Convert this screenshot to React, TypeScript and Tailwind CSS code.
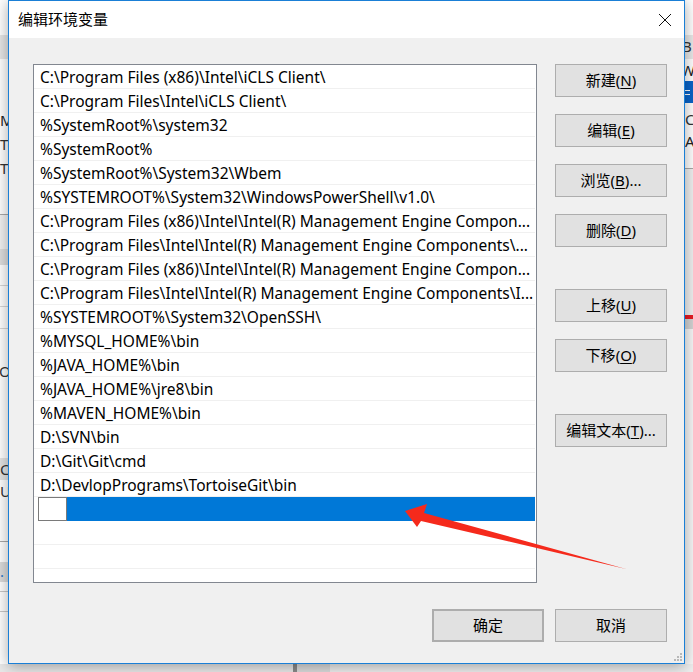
import React from "react"

const paths = [
  "C:\\Program Files (x86)\\Intel\\iCLS Client\\",
  "C:\\Program Files\\Intel\\iCLS Client\\",
  "%SystemRoot%\\system32",
  "%SystemRoot%",
  "%SystemRoot%\\System32\\Wbem",
  "%SYSTEMROOT%\\System32\\WindowsPowerShell\\v1.0\\",
  "C:\\Program Files (x86)\\Intel\\Intel(R) Management Engine Compon...",
  "C:\\Program Files\\Intel\\Intel(R) Management Engine Components\\...",
  "C:\\Program Files (x86)\\Intel\\Intel(R) Management Engine Compon...",
  "C:\\Program Files\\Intel\\Intel(R) Management Engine Components\\I...",
  "%SYSTEMROOT%\\System32\\OpenSSH\\",
  "%MYSQL_HOME%\\bin",
  "%JAVA_HOME%\\bin",
  "%JAVA_HOME%\\jre8\\bin",
  "%MAVEN_HOME%\\bin",
  "D:\\SVN\\bin",
  "D:\\Git\\Git\\cmd",
  "D:\\DevlopPrograms\\TortoiseGit\\bin",
]

const uiFont = "font-['Noto_Sans','Noto_Sans_CJK_SC',sans-serif]"

function WinButton({
  label,
  hotkey,
  suffix,
  className = "",
}: {
  label: string
  hotkey?: string
  suffix?: string
  className?: string
}) {
  return (
    <div
      className={`w-[112px] h-[33px] flex items-center justify-center bg-[#e1e1e1] border border-[#adadad] text-[15px] text-black ${className}`}
    >
      <span>
        {label}
        {hotkey && (
          <>
            (<span className="underline underline-offset-2">{hotkey}</span>)
          </>
        )}
        {suffix}
      </span>
    </div>
  )
}

// bits of the window behind the dialog, peeking out on the left
function LeftStrip() {
  return (
    <div className="w-[8px] h-full bg-white overflow-hidden flex flex-col text-[15px] leading-[24px] whitespace-nowrap">
      <div className="h-[35px]" />
      <div className="h-[24px] bg-[#e6e6e6]" />
      <div className="h-[49px]" />
      <div className="h-[24px] text-[#222]">M</div>
      <div className="h-[24px]">
        <span className="text-[#333]">T</span>
        <span className="text-[#2b79c9]">e</span>
      </div>
      <div className="h-[24px]">
        <span className="text-[#333]">T</span>
        <span className="text-[#2b79c9]">e</span>
      </div>
      <div className="h-[35px] border-b border-[#a9a9a9]" />
      <div className="h-[34px] bg-[#f2f2f2]" />
      <div className="h-[16px] bg-[#dedede]" />
      <div className="h-[21px] border-b border-[#d6d6d6]" />
      <div className="h-[21px] border-b border-[#d6d6d6]" />
      <div className="h-[22px] border-b border-[#d6d6d6]" />
      <div className="h-[30px]" />
      <div className="h-[24px] text-[#333] -ml-[1px]">Or</div>
      <div className="h-[75px]" />
      <div className="h-[22px] bg-[#e4e4e4] text-[#333] leading-[22px]">C</div>
      <div className="h-[22px] text-[#333] leading-[22px]">US</div>
      <div className="h-[40px] border-b border-[#a9a9a9]" />
      <div className="h-[20px]" />
      <div className="h-[20px] bg-[#dcdcdc] text-[#2b79c9] leading-[18px]">.</div>
      <div className="h-[10px] border-b border-[#c8c8c8]" />
      <div className="h-[20px] border-b border-[#c8c8c8]" />
      <div className="flex-1" />
    </div>
  )
}

function RightStrip() {
  return (
    <div className="w-[8px] h-full bg-white overflow-hidden flex flex-col text-[15px] leading-[22px] whitespace-nowrap">
      <div className="h-[35px]" />
      <div className="h-[24px] bg-[#e8e8e8] text-[#333] -ml-[3px]">B</div>
      <div className="h-[22px] text-[#222] -ml-[4px]">W</div>
      <div className="h-[22px] bg-[#0a64c8] flex flex-col justify-center gap-[3px]">
        <div className="h-[1px] w-[5px] bg-white" />
        <div className="h-[1px] w-[5px] bg-white" />
      </div>
      <div className="h-[5px]" />
      <div className="h-[22px] text-[#333]">C</div>
      <div className="h-[25px] text-[#222]">AI</div>
      <div className="h-[14px] border-b border-[#a9a9a9]" />
      <div className="h-[146px] bg-[#f0f0f0]" />
      <div className="h-[4px] bg-[#e81b23]" />
      <div className="h-[10px] bg-[#d4d4d4]" />
      <div className="flex-1 bg-[#f7f7f7]" />
    </div>
  )
}

function CloseIcon() {
  return (
    <svg width="14" height="14" viewBox="0 0 14 14">
      <path d="M1 1 L13 13 M13 1 L1 13" stroke="#111" strokeWidth="1" fill="none" />
    </svg>
  )
}

function Grip() {
  const dots = [
    [9, 0],
    [6, 3],
    [9, 3],
    [3, 6],
    [6, 6],
    [9, 6],
  ]
  return (
    <svg width="12" height="9" viewBox="0 0 12 9">
      {dots.map(([x, y], i) => (
        <rect key={i} x={x} y={y} width="2" height="2" fill="#b8b8b8" />
      ))}
    </svg>
  )
}

function PathList() {
  return (
    <div className="w-[504px] h-[519px] border border-[#828790] bg-white font-['Noto_Sans',sans-serif] text-[15.5px] text-black">
      <div className="mr-[1px]">
        {paths.map((p) => (
          <div
            key={p}
            className="h-[24px] border-b border-[#f0f0f0] pl-[6px] pr-[2px] pt-[1px] leading-[23px] whitespace-nowrap overflow-hidden"
          >
            {p}
          </div>
        ))}
        {/* new empty entry being edited */}
        <div className="h-[24px] flex">
          <div className="ml-[4px] w-[29px] h-[24px] bg-white border border-[#7a7a7a]" />
          <div className="flex-1 bg-[#0078d7]" />
        </div>
        <div className="h-[24px] border-b border-[#f0f0f0]" />
        <div className="h-[24px] border-b border-[#f0f0f0]" />
      </div>
    </div>
  )
}

export default function App() {
  return (
    <div className={`w-[693px] h-[672px] overflow-hidden relative flex flex-col bg-[#ececec] ${uiFont}`}>
      <div className="flex h-[664px]">
        <LeftStrip />
        <div className="relative z-10 w-[677px] h-[664px] border border-[#1a7fd6] bg-[#f0f0f0] flex flex-col shadow-[0_2px_14px_rgba(0,0,0,0.35)]">
          {/* title bar */}
          <div className="h-[37px] bg-white flex items-center justify-between pl-[9px] pr-[12px]">
            <span className="text-[15px] text-black">编辑环境变量</span>
            <CloseIcon />
          </div>

          {/* body */}
          <div className="flex-1 flex flex-col pt-[26px] pl-[24px] pr-[17px]">
            <div className="flex gap-[18px]">
              <PathList />
              <div className="flex flex-col">
                <WinButton label="新建" hotkey="N" />
                <WinButton label="编辑" hotkey="E" className="mt-[17px]" />
                <WinButton label="浏览" hotkey="B" suffix="..." className="mt-[17px]" />
                <WinButton label="删除" hotkey="D" className="mt-[17px]" />
                <WinButton label="上移" hotkey="U" className="mt-[42px]" />
                <WinButton label="下移" hotkey="O" className="mt-[17px]" />
                <WinButton label="编辑文本" hotkey="T" suffix="..." className="mt-[42px]" />
              </div>
            </div>

            <div className="flex justify-end gap-[11px] mt-[26px]">
              <WinButton label="确定" className="w-[111px] border-2 border-[#0078d7]" />
              <WinButton label="取消" />
            </div>
          </div>

          <div className="absolute right-[1px] bottom-[1px]">
            <Grip />
          </div>
        </div>
        <RightStrip />
      </div>

      <div className="h-[8px] flex">
        <div className="w-[293px] bg-[#e9e9e9]" />
        <div className="w-[4px] bg-[#8a8a8a]" />
        <div className="w-[33px] bg-[#dcdcdc]" />
        <div className="flex-1 bg-[#eeeeee]" />
      </div>

      {/* red annotation arrow */}
      <svg
        className="absolute left-0 top-0 z-20 pointer-events-none"
        width="693"
        height="672"
        viewBox="0 0 693 672"
      >
        <polygon
          points="405,511 427,504 424,513 626,569 421,521 417,527"
          fill="#f52a1c"
        />
      </svg>
    </div>
  )
}
